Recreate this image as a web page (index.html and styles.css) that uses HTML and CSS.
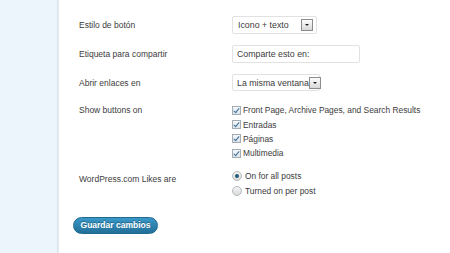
FILE: index.html
```html
<!DOCTYPE html>
<html>
<head>
    <link rel="stylesheet" href="styles.css">
</head>
<body>
    <div class="sidebar"></div>
    <div class="content">
        <form class="settings">
            <div class="row">
                <div class="label">Estilo de botón</div>
                <div class="field">
                    <div class="select select-style">
                        <span>Icono + texto</span>
                        <span class="arrow"></span>
                    </div>
                </div>
            </div>

            <div class="row">
                <div class="label">Etiqueta para compartir</div>
                <div class="field">
                    <div class="text-input">Comparte esto en:</div>
                </div>
            </div>

            <div class="row row-tight">
                <div class="label">Abrir enlaces en</div>
                <div class="field">
                    <div class="select select-window">
                        <span>La misma ventana</span>
                        <span class="arrow"></span>
                    </div>
                </div>
            </div>

            <div class="row row-list">
                <div class="label">Show buttons on</div>
                <div class="field">
                    <div class="option"><span class="checkbox"></span>Front Page, Archive Pages, and Search Results</div>
                    <div class="option"><span class="checkbox"></span>Entradas</div>
                    <div class="option"><span class="checkbox"></span>Páginas</div>
                    <div class="option"><span class="checkbox"></span>Multimedia</div>
                </div>
            </div>

            <div class="row row-radios">
                <div class="label">WordPress.com Likes are</div>
                <div class="field">
                    <div class="option radio-option"><span class="radio checked"></span>On for all posts</div>
                    <div class="option radio-option"><span class="radio"></span>Turned on per post</div>
                </div>
            </div>

            <div class="actions">
                <span class="button-primary">Guardar cambios</span>
            </div>
        </form>
    </div>
</body>
</html>
```

FILE: styles.css
```css
body {
    margin: 0;
    height: 253px;
    display: flex;
    font-family: "Liberation Sans", Arial, sans-serif;
    font-size: 8.5px;
    color: #3c3c3c;
    background: white;
    overflow: hidden;
}
.sidebar {
    width: 57px;
    flex: none;
    background: #edf5fc;
    border-right: 1px solid #d9e3ec;
    box-shadow: 1px 0 1px #e7edf2;
}
.content {
    flex: 1;
    padding-left: 15px;
}
.settings {
    padding-top: 16px;
}
.row {
    display: flex;
    padding-left: 6px;
    margin-bottom: 11px;
}
.row-tight {
    margin-bottom: 12px;
}
.label {
    width: 153px;
    flex: none;
    display: flex;
    align-items: center;
}
.row-list .label,
.row-radios .label {
    align-items: flex-start;
    line-height: 14px;
}
.row-radios .label {
    padding-top: 3px;
}
.row-list {
    margin-bottom: 8px;
}
.select,
.text-input {
    box-sizing: border-box;
    height: 18px;
    border: 1px solid #e2e2e2;
    border-radius: 2px;
    background: white;
    display: flex;
    align-items: center;
    padding-left: 5px;
    white-space: nowrap;
    font-size: 8.8px;
}
.select-style {
    width: 85px;
    justify-content: space-between;
    padding-right: 3px;
}
.select-window {
    width: 88px;
    height: 17px;
    padding-right: 1px;
    padding-left: 4px;
}
.text-input {
    width: 128px;
    padding-left: 4px;
}
.arrow {
    width: 10px;
    height: 10px;
    border: 1px solid #8c8c8c;
    background: linear-gradient(#fdfdfd, #d8d8d8);
    position: relative;
    flex: none;
}
.arrow::after {
    content: "";
    position: absolute;
    left: 3px;
    top: 4px;
    border-left: 2px solid transparent;
    border-right: 2px solid transparent;
    border-top: 2px solid #222;
}
.option {
    display: flex;
    align-items: center;
    height: 14.4px;
    white-space: nowrap;
    font-size: 8.4px;
}
.radio-option {
    height: 15px;
}
.checkbox {
    width: 7px;
    height: 7px;
    border: 1px solid #a4acb3;
    background: linear-gradient(#f6f8fa, #dde3e8);
    margin-right: 2px;
    position: relative;
}
.checkbox::after {
    content: "";
    position: absolute;
    left: 2px;
    top: 0;
    width: 2px;
    height: 5px;
    border-right: 1.2px solid #3a6f9e;
    border-bottom: 1.2px solid #3a6f9e;
    transform: rotate(40deg);
}
.radio {
    width: 8px;
    height: 8px;
    border: 1px solid #b2b8bd;
    border-radius: 50%;
    background: linear-gradient(#f4f4f4, #dadada);
    margin-right: 3px;
    position: relative;
}
.radio.checked::after {
    content: "";
    position: absolute;
    left: 2px;
    top: 2px;
    width: 4px;
    height: 4px;
    border-radius: 50%;
    background: #24587a;
}
.actions {
    margin-top: 18px;
}
.button-primary {
    display: inline-block;
    box-sizing: border-box;
    width: 85px;
    height: 17px;
    line-height: 15px;
    text-align: center;
    color: white;
    font-weight: bold;
    font-size: 8.5px;
    border: 1px solid #1f6a8f;
    border-radius: 9px;
    background: linear-gradient(#3a98c8, #216f98);
    text-shadow: 0 -1px 0 rgba(0,0,0,0.3);
}
```
